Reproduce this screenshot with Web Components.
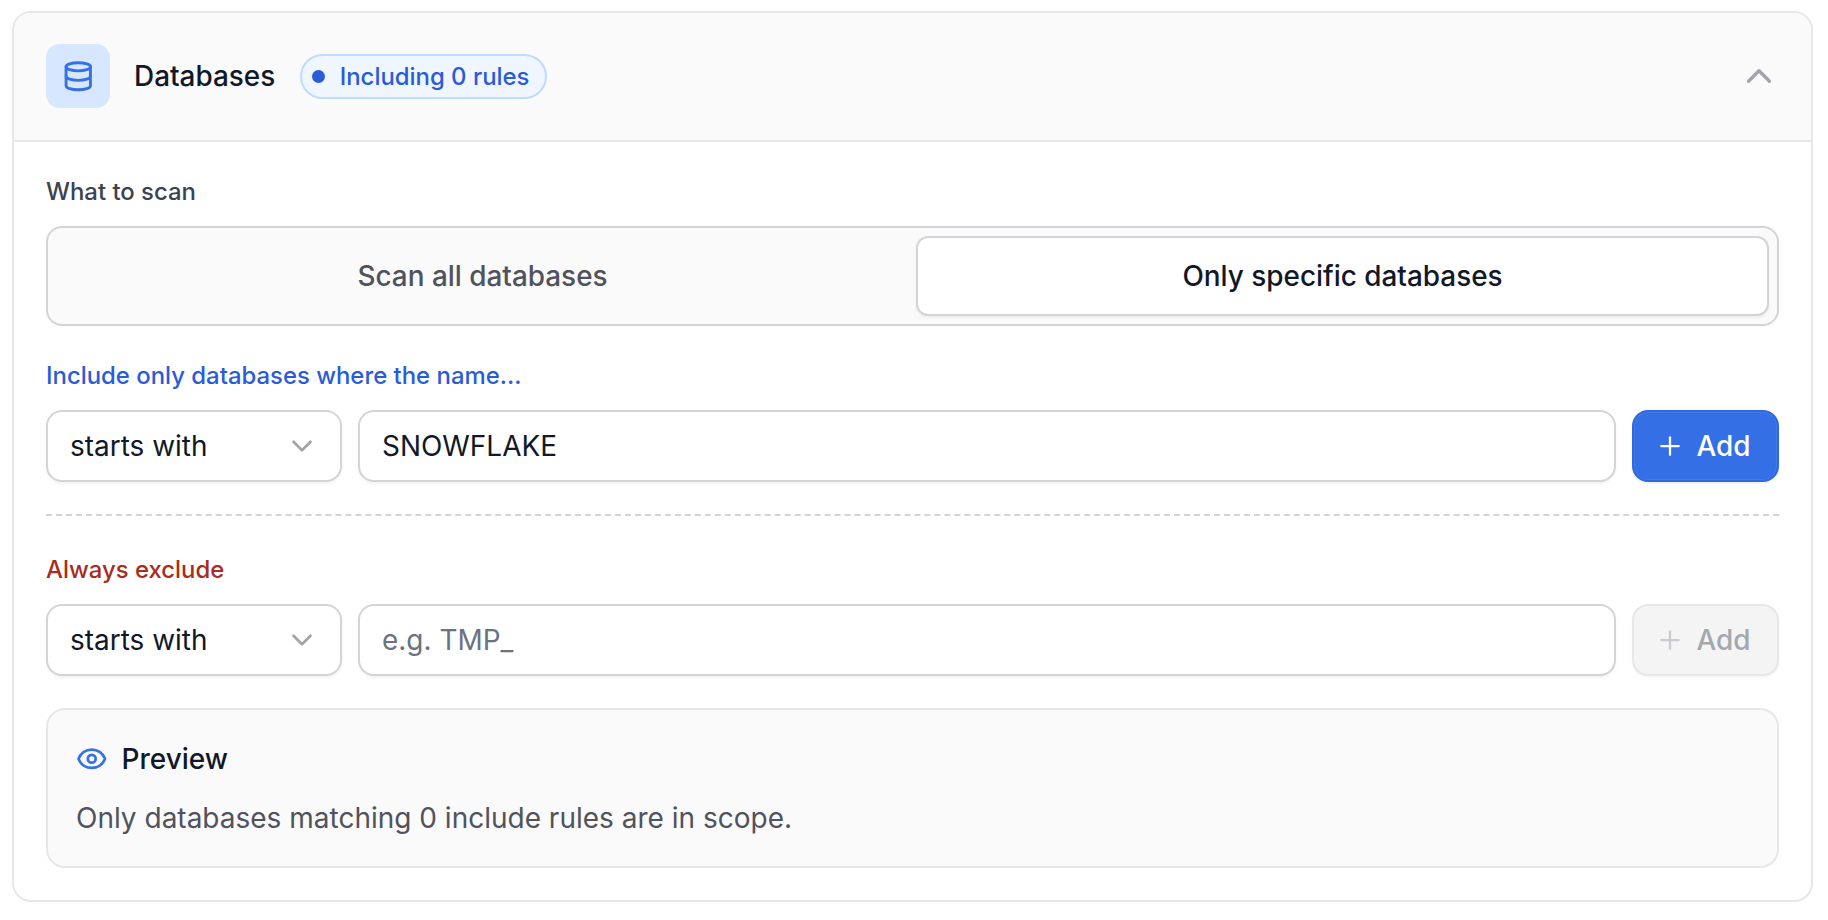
<!doctype html>
<html>
<head>
<meta charset="utf-8">
<style>
  html, body { margin: 0; background: #fff; }
  body { font-family: Inter, "Liberation Sans", sans-serif; padding: 11px 15px 0 12px; }
</style>
</head>
<body>
<scan-panel title="Databases" badge="Including 0 rules">
  <field-label>What to scan</field-label>
  <seg-toggle first="Scan all databases" second="Only specific databases"></seg-toggle>
  <field-label tone="blue" style="margin-top:32px">Include only databases where the name...</field-label>
  <rule-row value="SNOWFLAKE"></rule-row>
  <dashed-rule></dashed-rule>
  <field-label tone="red">Always exclude</field-label>
  <rule-row placeholder="e.g. TMP_" disabled></rule-row>
  <scope-preview>Only databases matching 0 include rules are in scope.</scope-preview>
</scan-panel>

<script>
const ICON = (size, stroke, body) =>
  `<svg width="${size}" height="${size}" viewBox="0 0 24 24" fill="none" stroke="currentColor" stroke-width="${stroke}" stroke-linecap="round" stroke-linejoin="round">${body}</svg>`;

class ScanPanel extends HTMLElement {
  constructor() {
    super();
    const shadow = this.attachShadow({ mode: 'open' });
    shadow.innerHTML = `
      <style>
        :host { display: block; width: 1801px; box-sizing: border-box; border: 2px solid #e7e7ea; border-radius: 19px; background: #fff; overflow: hidden; }
        header { display: flex; align-items: center; height: 126px; padding: 0 31px 1px 32px; box-sizing: content-box; background: #fafafa; border-bottom: 2px solid #e7e7ea; }
        .tile { width: 64px; height: 64px; border-radius: 14px; background: #d6e7ff; color: #3570e6; display: flex; align-items: center; justify-content: center; flex: none; }
        h2 { margin: 0 0 0 24px; font-size: 27.9px; line-height: 40px; font-weight: 500; color: #111827; }
        .badge { margin-left: 25px; display: flex; align-items: center; gap: 14.5px; height: 45px; box-sizing: border-box; padding: 0 16px 0 10px; border: 2px solid #bfdbfe; border-radius: 23px; background: #eff6ff; color: #2b5bd7; font-size: 23.9px; font-weight: 500; }
        .dot { width: 13px; height: 13px; border-radius: 50%; background: #2b5bd7; }
        .up { margin-left: auto; display: flex; color: #a1a4ab; }
        main { display: block; padding: 32px 32px 32px; }
      </style>
      <header>
        <div class="tile">${ICON(32.5, 2.1, '<ellipse cx="12" cy="5" rx="9" ry="3"/><path d="M3 5V19A9 3 0 0 0 21 19V5"/><path d="M3 12A9 3 0 0 0 21 12"/>')}</div>
        <h2></h2>
        <div class="badge"><span class="dot"></span><span class="txt"></span></div>
        <div class="up">${ICON(42, 1.9, '<path d="m18 15-6-6-6 6"/>')}</div>
      </header>
      <main><slot></slot></main>`;
  }
  connectedCallback() {
    this.shadowRoot.querySelector('h2').textContent = this.getAttribute('title');
    this.shadowRoot.querySelector('.txt').textContent = this.getAttribute('badge');
    this.removeAttribute('title');
  }
}
customElements.define('scan-panel', ScanPanel);

class FieldLabel extends HTMLElement {
  constructor() {
    super();
    this.attachShadow({ mode: 'open' }).innerHTML = `
      <style>
        :host { display: block; font-size: 23.9px; line-height: 35px; font-weight: 500; color: #3b4250; }
        :host([tone="blue"]) { color: #2b5bd7; }
        :host([tone="red"]) { color: #a82c20; }
      </style>
      <slot></slot>`;
  }
}
customElements.define('field-label', FieldLabel);

class SegToggle extends HTMLElement {
  constructor() {
    super();
    this.attachShadow({ mode: 'open' }).innerHTML = `
      <style>
        :host { display: grid; grid-template-columns: 1fr 1fr; gap: 7px; box-sizing: border-box; margin-top: 17px; height: 100px; padding: 8px; border: 2px solid #d4d4d8; border-radius: 16px; background: #fafafa; }
        div { display: flex; align-items: center; justify-content: center; font-size: 27.9px; font-weight: 500; color: #50525c; border-radius: 12px; }
        .on { background: #fff; border: 2px solid #d4d4d8; color: #111827; box-shadow: 0 2px 3px rgba(0,0,0,.05); }
      </style>
      <div class="a"></div><div class="b on"></div>`;
  }
  connectedCallback() {
    this.shadowRoot.querySelector('.a').textContent = this.getAttribute('first');
    this.shadowRoot.querySelector('.b').textContent = this.getAttribute('second');
  }
}
customElements.define('seg-toggle', SegToggle);

class RuleRow extends HTMLElement {
  constructor() {
    super();
    this.attachShadow({ mode: 'open' }).innerHTML = `
      <style>
        :host { display: flex; gap: 16px; margin-top: 17px; height: 72px; font-size: 27.95px; color: #111827; }
        .box { box-sizing: border-box; display: flex; align-items: center; background: #fff; border: 2px solid #d4d4d8; border-radius: 16px; box-shadow: 0 2px 3px rgba(0,0,0,.05); }
        .select { width: 296px; padding: 0 21px 0 22px; justify-content: space-between; }
        .select svg { color: #a1a4ab; }
        .input { flex: 1; padding: 0 22px; }
        .input.empty { color: #6b7280; }
        button { box-sizing: border-box; width: 147px; display: flex; align-items: center; justify-content: center; gap: 11px; padding: 0 5px 0 0; font: 500 27.9px Inter, sans-serif; color: #fff; background: #356fe6; border: 2px solid #3068de; border-radius: 16px; box-shadow: inset 0 0 0 1px rgba(255,255,255,.08), 0 2px 3px rgba(0,0,0,.05); }
        button svg { flex: none; }
        :host([disabled]) button { color: #a4a7ae; background: #f4f4f5; border-color: #e7e7ea; box-shadow: 0 2px 3px rgba(0,0,0,.04); }
        :host([disabled]) button svg { color: #c9cbd0; }
      </style>
      <div class="box select"><span>starts with</span>${ICON(34, 1.9, '<path d="m6 9 6 6 6-6"/>')}</div>
      <div class="box input"></div>
      <button>${ICON(30, 1.8, '<path d="M5 12h14"/><path d="M12 5v14"/>')}<span>Add</span></button>`;
  }
  connectedCallback() {
    const input = this.shadowRoot.querySelector('.input');
    const value = this.getAttribute('value');
    input.textContent = value || this.getAttribute('placeholder');
    input.classList.toggle('empty', !value);
  }
}
customElements.define('rule-row', RuleRow);

class DashedRule extends HTMLElement {
  constructor() {
    super();
    this.attachShadow({ mode: 'open' }).innerHTML = `
      <style>
        :host { display: block; margin: 32px 0 36px; height: 2px; border-top: 2px dashed #d4d4d8; box-sizing: border-box; }
      </style>`;
  }
}
customElements.define('dashed-rule', DashedRule);

class ScopePreview extends HTMLElement {
  constructor() {
    super();
    this.attachShadow({ mode: 'open' }).innerHTML = `
      <style>
        :host { display: block; box-sizing: border-box; margin-top: 32px; height: 160px; padding: 29px 28px 0; border: 2px solid #e7e7ea; border-radius: 19px; background: #fafafa; }
        .head { display: flex; align-items: center; gap: 14px; height: 39px; font-size: 28px; font-weight: 500; color: #111827; }
        .head svg { color: #3570e6; flex: none; }
        p { margin: 19px 0 0; font-size: 28px; line-height: 42px; color: #50525c; }
      </style>
      <div class="head">${ICON(31.5, 2.1, '<path d="M2.062 12.348a1 1 0 0 1 0-.696 10.75 10.75 0 0 1 19.876 0 1 1 0 0 1 0 .696 10.75 10.75 0 0 1-19.876 0"/><circle cx="12" cy="12" r="3"/>')}<span>Preview</span></div>
      <p><slot></slot></p>`;
  }
}
customElements.define('scope-preview', ScopePreview);
</script>
</body>
</html>
